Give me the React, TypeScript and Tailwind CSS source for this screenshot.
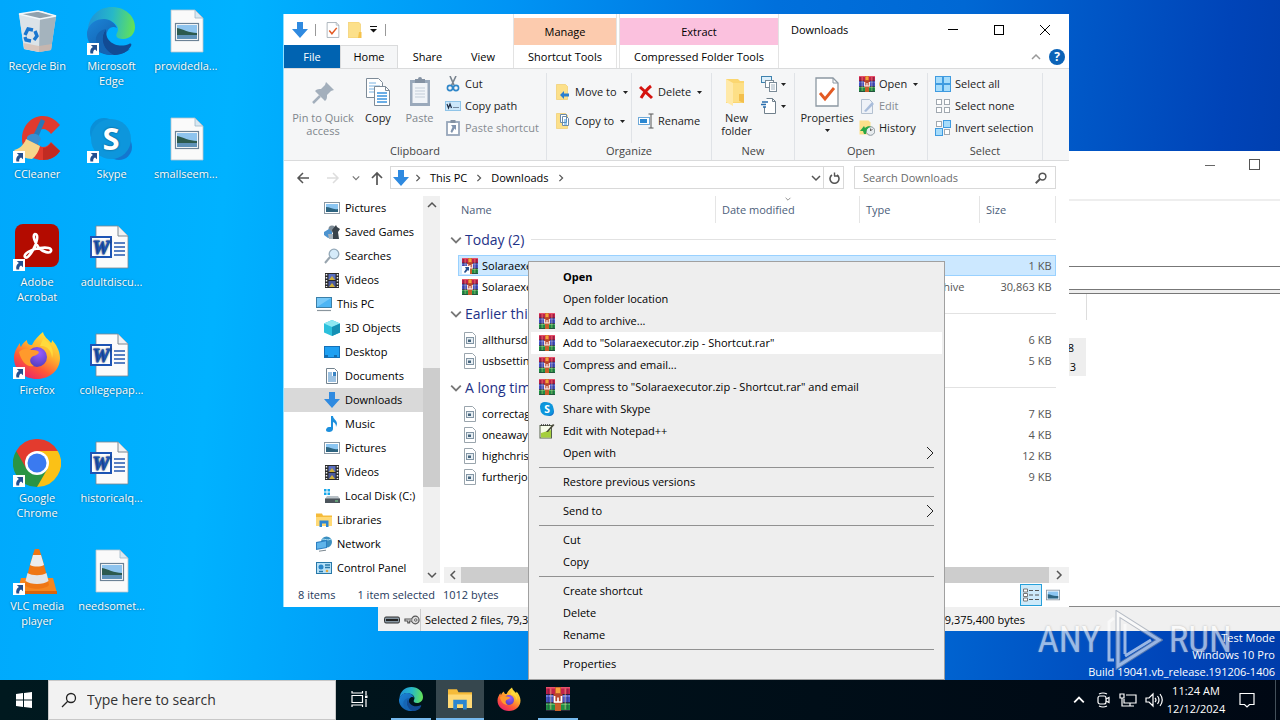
import React from "react";

type IconProps = { className?: string };

/* ---------- application and file icons ---------- */

function RarIcon({ className = "size-4" }: IconProps) {
  return (
    <svg viewBox="0 0 16 16" className={className} aria-hidden="true">
      <rect x="0" y="0" width="16" height="5" fill="#c2224a" />
      <path d="M0 .5h16" stroke="#e8506a" />
      <rect x="0" y="5" width="16" height="5.500" fill="#4353c4" />
      <path d="M0 6h16" stroke="#7f8cf0" />
      <rect x="0" y="10.500" width="16" height="5.500" fill="#1f8f44" />
      <path d="M0 11.500h16" stroke="#54b868" />
      <path d="M0 5h16M0 10.500h16M0 15.700h16" stroke="#2a1838" strokeWidth=".6" />
      <path d="M1.500 1v14M14.500 1v14" stroke="#2c1a44" strokeWidth=".7" opacity=".4" />
      <path d="M3.200 1v14M12.800 1v14" stroke="#f0c890" strokeWidth=".7" opacity=".6" />
      <rect x="6" y="0" width="4" height="16" fill="#c8602a" />
      <rect x="6.600" y=".5" width="2.800" height="3.500" fill="#f5a23c" />
      <rect x="5" y="4.500" width="6" height="6.500" fill="#b8452c" />
      <path d="M5.700 6v4h4.600V6M8 7v2.500" stroke="#fff" strokeWidth="1.100" fill="none" />
    </svg>
  );
}

function ShortcutBadge() {
  return (
    <svg viewBox="0 0 12 12" className="absolute bottom-0 left-0 size-3" aria-hidden="true">
      <rect width="12" height="12" fill="#fff" />
      <path d="M3.800 2h6.200v6.200L8.100 6.400C6.500 7 6 8.200 6.200 10.500L3.400 10.500C2.600 7.500 4 5.300 5.900 4.100z" fill="#24508f" />
    </svg>
  );
}

function RecycleIcon({ className = "size-12" }: IconProps) {
  return (
    <svg viewBox="0 0 48 48" className={className} aria-hidden="true">
      <path d="M6 7 11 42 26 45 38 43 43 9 29 4z" fill="#cbd5dc" />
      <path d="M6 7 11 42 26 45 27 12z" fill="#dbe3e8" />
      <path d="M27 12 26 45 38 43 43 9z" fill="#a4b3bd" />
      <path d="M6 7 27 12 43 9 25 4z" fill="#8fa1ad" stroke="#f2f7fa" strokeWidth="1.600" />
      <path d="M10.500 36l.8 6 15 3 11.700-2 1-6-13 2z" fill="#d9b9a8" opacity=".65" />
      <g fill="none" stroke="#1976cf" strokeWidth="3.400">
        <path d="M12 28l3-6 5 1" />
        <path d="M22 24l2 5-3 4" />
        <path d="M18 34l-5-1-1-3" />
      </g>
    </svg>
  );
}

function EdgeIcon({ className = "size-12" }: IconProps) {
  return (
    <svg viewBox="0 0 48 48" className={className} aria-hidden="true">
      <defs>
        <linearGradient id="edgeTop" x1="0" y1=".4" x2="1" y2=".5">
          <stop offset="0" stopColor="#1f93d8" />
          <stop offset=".5" stopColor="#27b8c8" />
          <stop offset="1" stopColor="#63e256" />
        </linearGradient>
        <linearGradient id="edgeLow" x1="0" y1="0" x2="1" y2="1">
          <stop offset="0" stopColor="#1c86d8" />
          <stop offset="1" stopColor="#0e4f9e" />
        </linearGradient>
      </defs>
      <path d="M1 22C2 9 12 0 25 0c13 0 23 9 23 20 0 7-5 12-12 12-6 0-8-3-6-6 3-5-1-11-9-13C12 11 4 15 1 22z" fill="url(#edgeTop)" />
      <path d="M0 25C2 16 9 12 17 12c6 0 11 4 13 9-3-2-7-1-9 2-5 9 3 21 17 20 2 0 4-1 5-1-5 4-12 6-19 6C10 48-1 37 0 25z" fill="url(#edgeLow)" />
      <path d="M19 22c-6 8-4 20 8 26 9 0 14-4 17-9 1-2 0-3-2-2-11 5-25-2-23-15z" fill="#124b94" />
      <path d="M19 22c-4 5-5 12-2 17 2 4 5 7 10 9-9 1-17-4-18-14-1-6 4-11 10-12z" fill="#1565b4" />
    </svg>
  );
}

function FirefoxIcon({ className = "size-12" }: IconProps) {
  return (
    <svg viewBox="0 0 48 48" className={className} aria-hidden="true">
      <defs>
        <linearGradient id="ffBody" x1=".85" y1="0" x2=".25" y2="1">
          <stop offset="0" stopColor="#fff23f" />
          <stop offset=".4" stopColor="#ffb22e" />
          <stop offset=".7" stopColor="#ff5a36" />
          <stop offset="1" stopColor="#e8206c" />
        </linearGradient>
        <radialGradient id="ffGlobe" cx=".6" cy=".3" r=".8">
          <stop offset="0" stopColor="#9a5cff" />
          <stop offset="1" stopColor="#4b3bb5" />
        </radialGradient>
      </defs>
      <path d="M30 1c1 5 5 7 8 11 1-1 1-2 1-3 4 4 8 11 8 18 0 12-10 21-23 21S1 39 1 27c0-6 3-11 6-15 0 2 0 3 1 4 1-3 3-5 6-7 0 4 2 5 5 5 3-6 7-10 11-13z" fill="url(#ffBody)" />
      <circle cx="24" cy="26" r="10" fill="url(#ffGlobe)" />
      <path d="M6 21c4-4 8-4 12-2 3 0 6 0 8 2-1 4-6 3-8 6-2 3 0 6 3 8-7 2-13-5-15-14z" fill="#ff9a2c" />
      <path d="M27 15c7-1 12 5 12 12 3-8-2-16-9-19z" fill="#ffda3c" />
    </svg>
  );
}

function ChromeIcon({ className = "size-12" }: IconProps) {
  return (
    <svg viewBox="0 0 48 48" className={className} aria-hidden="true">
      <path d="M24 24 3.200 12A24 24 0 0 1 44.800 12z" fill="#e33b2e" />
      <path d="M24 24 44.800 12A24 24 0 0 1 24 48z" fill="#fbc116" />
      <path d="M24 12h20.800L24 48l10-18z" fill="#fbc116" />
      <path d="M24 24v24A24 24 0 0 1 3.200 12z" fill="#2a9445" />
      <path d="M34.400 30 24 48 19 30z" fill="#2a9445" />
      <path d="M3.200 12 13.600 30 24 12z" fill="#e33b2e" />
      <circle cx="24" cy="24" r="12" fill="#fff" />
      <circle cx="24" cy="24" r="9.500" fill="#3a7af0" />
    </svg>
  );
}

function VlcIcon({ className = "size-12" }: IconProps) {
  return (
    <svg viewBox="0 0 48 48" className={className} aria-hidden="true">
      <path d="M8 31h32l4 15H4z" fill="#f6861f" />
      <path d="M4 44h40v3H4z" fill="#d9640c" />
      <path d="M22 2h4c1 0 10 34 10 36-4 5-20 5-24 0C12 36 21 2 22 2z" fill="#ef7613" />
      <path d="M20 8h8l3 10c-4 2-10 2-14 0z" fill="#ececec" />
      <path d="M14.500 26c5 3 14 3 19 0l2 8c-5 4-18 4-23 0z" fill="#e4e4e4" />
    </svg>
  );
}

function CcleanerIcon({ className = "size-12" }: IconProps) {
  return (
    <svg viewBox="0 0 48 48" className={className} aria-hidden="true">
      <path d="M47 10C42 4 36 1 30 1 18 1 9 11 9 24c0 12 9 21 20 21 8 0 14-3 18-9l-9-9c-2 3-5 5-8 5-4 0-7-4-7-9s3-9 7-9c3 0 6 2 8 5z" fill="#df3a2e" />
      <path d="M30 45c7 0 13-3 17-9l-9-8c-2 3-5 5-8 5z" fill="#c12b22" />
      <path d="M28 4l4 2-8 19-5-2z" fill="#2878b8" />
      <path d="M14 22c4-5 12-4 14 2l-4 6-10-5z" fill="#3a8ed0" />
      <path d="M13 24l14 7c-1 5-4 10-8 13-5 0-14-3-18-9 5-1 10-5 12-11z" fill="#f6d68c" />
    </svg>
  );
}

function SkypeIcon({ className = "size-12" }: IconProps) {
  return (
    <svg viewBox="0 0 48 48" className={className} aria-hidden="true">
      <circle cx="17" cy="17" r="14" fill="#0a8fd8" />
      <circle cx="32" cy="32" r="13" fill="#1477cf" />
      <circle cx="24" cy="24" r="20" fill="#0d96dc" />
      <text x="24" y="35" textAnchor="middle" fontFamily="Open Sans, sans-serif" fontSize="31" fontWeight="700" fill="#fff">S</text>
    </svg>
  );
}

function AcrobatIcon({ className = "size-12" }: IconProps) {
  return (
    <svg viewBox="0 0 48 48" className={className} aria-hidden="true">
      <rect x="2" y="1" width="44" height="43" rx="8" fill="#b30b00" />
      <path d="M12 34c-2-3 6-8 15-9 7-1 12 0 11 3s-8 1-12-3c-4-5-7-13-4-14 4 0 2 9-2 16-3 5-6 9-8 7z" fill="none" stroke="#fff" strokeWidth="2.600" />
    </svg>
  );
}

function PictureFileIcon({ className = "size-12" }: IconProps) {
  return (
    <svg viewBox="0 0 48 48" className={className} aria-hidden="true">
      <path d="M9 3h24l8 8v34H9z" fill="#fafafa" stroke="#b9c4cc" strokeWidth=".8" />
      <path d="M33 3v8h8z" fill="#d8e8f2" stroke="#9fb6c6" strokeWidth=".8" />
      <rect x="13.500" y="16.500" width="23" height="17" fill="#fff" stroke="#6c8296" strokeWidth="1.200" />
      <rect x="15" y="18" width="20" height="14" fill="#8fc4ee" />
      <path d="M15 21c6 1 12 5 20 5v6H15z" fill="#2c5a4e" />
      <path d="M15 28h20v4H15z" fill="#5f92b8" />
    </svg>
  );
}

function WordFileIcon({ className = "size-12" }: IconProps) {
  return (
    <svg viewBox="0 0 48 48" className={className} aria-hidden="true">
      <path d="M9 3h22l10 10v32H9z" fill="#fbfbfb" stroke="#7c8790" strokeWidth=".8" />
      <path d="M31 3v10h10" fill="#eef1f3" stroke="#7c8790" />
      <path d="M27 20h11M27 24h11M27 28h11M27 32h11" stroke="#2458b0" strokeWidth="1.300" />
      <rect x="4" y="14" width="20" height="20" fill="#fff" stroke="#1d54b4" strokeWidth="2" />
      <text x="14" y="31" textAnchor="middle" fontFamily="Liberation Serif, serif" fontSize="19" fontStyle="italic" fontWeight="700" fill="#1d54b4" stroke="#1d54b4">W</text>
    </svg>
  );
}

function ArrowDownIcon({ className = "size-4" }: IconProps) {
  return (
    <svg viewBox="0 0 16 16" className={className} aria-hidden="true">
      <path d="M5 0h6v7h5l-8 9-8-9h5z" fill="#2f8ae0" />
    </svg>
  );
}

function FolderIcon({ className = "size-4" }: IconProps) {
  return (
    <svg viewBox="0 0 16 16" className={className} aria-hidden="true">
      <path d="M1.500 0h10l2 2v14h-12z" fill="#fce08a" stroke="#f0c860" strokeWidth=".6" />
      <path d="M12 10h2.500v6H11z" fill="#f5c24a" />
    </svg>
  );
}

function NewFolderIcon() {
  return (
    <svg viewBox="0 0 32 32" className="size-8" aria-hidden="true">
      <path d="M5 3h12l2 2h4v22H5z" fill="#fbd670" />
      <path d="M5 3l7 4v23l-7-4z" fill="#ffe9a8" />
      <path d="M12 7h11v19H12z" fill="#fddf86" />
      <path d="M18 18h5v9l-5-2z" fill="#f3bf4c" />
    </svg>
  );
}

function PictureIcon({ className = "size-4" }: IconProps) {
  return (
    <svg viewBox="0 0 16 16" className={className} aria-hidden="true">
      <rect x=".5" y="2.500" width="15" height="11" fill="#fff" stroke="#8a98a4" />
      <rect x="2" y="4" width="12" height="8" fill="#8cc6f2" />
      <path d="M2 7c4 0 7 3 12 2v3H2z" fill="#2d6480" />
    </svg>
  );
}

function SmallFileIcon({ className = "size-4" }: IconProps) {
  return (
    <svg viewBox="0 0 16 16" className={className} aria-hidden="true">
      <path d="M2.500.5h8l3 3v12h-11z" fill="#fff" stroke="#9aa5ad" />
      <rect x="4.500" y="5.500" width="7" height="6" fill="#e6edf2" stroke="#8295a4" />
      <path d="M6 7.500h3V10H6z" fill="#47667e" />
    </svg>
  );
}

function CheckDocIcon({ className = "size-4" }: IconProps) {
  return (
    <svg viewBox="0 0 24 30" className={className} aria-hidden="true">
      <path d="M1 1h17l5 5v23H1z" fill="#fff" stroke="#8c98a2" strokeWidth="1.300" />
      <path d="M18 1v5h5" fill="none" stroke="#8c98a2" />
      <path d="M5 16l5 6 9-11" fill="none" stroke="#e35a23" strokeWidth="2.800" />
    </svg>
  );
}

function SavedGamesIcon() {
  return (
    <svg viewBox="0 0 16 16" className="size-4 shrink-0" aria-hidden="true">
      <circle cx="8" cy="5" r="3.500" fill="#7d8b96" />
      <path d="M9 15V9L8 6l4-5 1 2 3 2-2 3 1 7z" fill="#39434b" />
      <path d="M0 8l5-3 3 3v5l-4 1-4-3z" fill="#4c93cf" />
      <path d="M4 10h5v5H5z" fill="#a7b3bc" />
    </svg>
  );
}

function SearchesIcon() {
  return (
    <svg viewBox="0 0 16 16" className="size-4 shrink-0" aria-hidden="true">
      <path d="M1 15l5-6" stroke="#98a4ae" strokeWidth="2" />
      <circle cx="10" cy="6" r="4.800" fill="#d5ebfa" stroke="#93a8b8" strokeWidth="1.300" />
    </svg>
  );
}

function VideoIcon() {
  return (
    <svg viewBox="0 0 16 16" className="size-4 shrink-0" aria-hidden="true">
      <rect x="1" y="1" width="14" height="15" fill="#2a2a2a" />
      <path d="M2.500 2v13M13.500 2v13" stroke="#f1f1f1" strokeWidth="1.500" strokeDasharray="1.500 1.500" />
      <rect x="4.500" y="2" width="7" height="6" fill="#5a6fc0" />
      <rect x="4.500" y="9" width="7" height="6" fill="#4a5aa0" />
      <path d="M5 8l3-4 3 4zM5 15l3-4 3 4z" fill="#d0b13a" />
    </svg>
  );
}

function ComputerIcon() {
  return (
    <svg viewBox="0 0 16 16" className="size-4 shrink-0" aria-hidden="true">
      <rect x=".5" y="1.500" width="15" height="10" fill="#4db5f4" stroke="#3b7fa8" />
      <path d="M1 2h14L1 11z" fill="#8ad2fa" opacity=".7" />
      <path d="M1 14.500h14" stroke="#8a959d" strokeWidth="1.200" />
    </svg>
  );
}

function CubeIcon() {
  return (
    <svg viewBox="0 0 16 16" className="size-4 shrink-0" aria-hidden="true">
      <path d="M8 0l8 3.500v9L8 16l-8-3.500v-9z" fill="#2cc0dc" />
      <path d="M8 0l8 3.500L8 7 0 3.500z" fill="#8ee8f2" />
      <path d="M8 7l8-3.500v9L8 16z" fill="#1590b4" />
    </svg>
  );
}

function DesktopIcon() {
  return (
    <svg viewBox="0 0 16 16" className="size-4 shrink-0" aria-hidden="true">
      <rect x=".5" y="2.500" width="15" height="11" fill="#1fa0f2" stroke="#1470b8" />
      <path d="M1 12h14" stroke="#0f5c9c" strokeDasharray="3 6" strokeWidth="1.500" />
    </svg>
  );
}

function DocumentIcon() {
  return (
    <svg viewBox="0 0 16 16" className="size-4 shrink-0" aria-hidden="true">
      <path d="M2.500.5h8l3 3v12h-11z" fill="#fff" stroke="#73838f" />
      <path d="M4 5h4M4 7h4M4 9h8M4 11h8M4 13h8" stroke="#3a84c4" />
      <path d="M9 4h3v4H9z" fill="#3a84c4" />
    </svg>
  );
}

function MusicIcon() {
  return (
    <svg viewBox="0 0 16 16" className="size-4 shrink-0" aria-hidden="true">
      <path d="M7 0h2c0 3 4 4 4 8l-1 3c0-3-1-4-3-5v7c0 2-2 3-4 3s-3-1-3-2 1-3 3-3h2z" fill="#1c8fdd" />
    </svg>
  );
}

function DiskIcon() {
  return (
    <svg viewBox="0 0 16 16" className="size-4 shrink-0" aria-hidden="true">
      <path d="M0 1h2.500v2.500H0zM3.500 1H6v2.500H3.500zM0 4.500h2.500V7H0zM3.500 4.500H6V7H3.500z" fill="#17a7ea" />
      <path d="M3 8h11l2 3H1z" fill="#b9c1c7" />
      <rect x="1" y="10.500" width="15" height="4.500" fill="#4c555c" />
      <path d="M11 13h3" stroke="#78e08f" />
    </svg>
  );
}

function LibraryIcon({ className = "size-4 shrink-0" }: IconProps) {
  return (
    <svg viewBox="0 0 16 16" className={className} aria-hidden="true">
      <path d="M0 1.500h6l1 2h9V14H0z" fill="#f5bb3a" />
      <path d="M0 5h16v9H0z" fill="#ffd975" />
      <path d="M3.500 8.500h9V15H10v-3.500H6V15H3.500z" fill="#2e86d0" />
    </svg>
  );
}

function NetworkIcon() {
  return (
    <svg viewBox="0 0 16 16" className="size-4 shrink-0" aria-hidden="true">
      <circle cx="10.500" cy="6" r="5.500" fill="#3c8fc0" />
      <path d="M6 3c3 0 6 2 9 0" stroke="#a8def5" fill="none" />
      <path d="M0 6l11-2v8l-11 2z" fill="#2c7fc2" />
      <path d="M1 7l9-1.700v6L1 12.800z" fill="#5fb4ea" />
      <path d="M3 15.200l7-1" stroke="#7b8790" />
    </svg>
  );
}

function ControlPanelIcon() {
  return (
    <svg viewBox="0 0 16 16" className="size-4 shrink-0" aria-hidden="true">
      <rect x=".5" y="2.500" width="15" height="11" fill="#b6e1f8" stroke="#2878a8" />
      <circle cx="5" cy="7" r="2.500" fill="#2a86c8" />
      <path d="M9 5h5M9 7.500h5M3 11.500h4" stroke="#2878a8" strokeWidth="1.300" />
      <circle cx="11" cy="11" r="1.300" fill="#e8a73a" />
    </svg>
  );
}

function NotepadIcon() {
  return (
    <svg viewBox="0 0 16 16" className="size-4" aria-hidden="true">
      <rect x="1" y="2.500" width="11.500" height="12.500" fill="#f6fbe8" stroke="#55604a" />
      <path d="M2 10l10-3v7.500H2z" fill="#a5cf3c" />
      <path d="M2 2h10" stroke="#333" strokeWidth="1.600" strokeDasharray="1 1" />
      <path d="M7 9l7-8 1.500 1L9 9z" fill="#4a4a3c" />
    </svg>
  );
}

/* ---------- small line glyphs ---------- */

function Chevron({ d, className = "size-2.5", color = "#555" }: IconProps & { d: "up" | "down" | "left" | "right"; color?: string }) {
  const paths = { up: "M1 7l4-4 4 4", down: "M1 3l4 4 4-4", left: "M7 1L3 5l4 4", right: "M3 1l4 4-4 4" };
  return (
    <svg viewBox="0 0 10 10" className={className} aria-hidden="true">
      <path d={paths[d]} fill="none" stroke={color} strokeWidth="1.500" />
    </svg>
  );
}

function Caret() {
  return (
    <svg viewBox="0 0 5 3" className="h-[3px] w-[5px] shrink-0" aria-hidden="true">
      <path d="M0 0h5L2.500 3z" fill="#222" />
    </svg>
  );
}

function Magnifier({ className = "size-3", color = "#555", thin = false }: IconProps & { color?: string; thin?: boolean }) {
  return (
    <svg viewBox="0 0 16 16" className={className} aria-hidden="true">
      <circle cx="10" cy="6" r="4.500" fill="none" stroke={color} strokeWidth={thin ? 1.3 : 2} />
      <path d="M7 9l-6 6" stroke={color} strokeWidth={thin ? 1.3 : 2.6} />
    </svg>
  );
}

/* ---------- desktop ---------- */

const desktopIcons: { label: string; Icon: React.FC<IconProps>; shortcut?: boolean; place: string }[] = [
  { label: "Recycle Bin", Icon: RecycleIcon, place: "col-start-1 row-start-1" },
  { label: "CCleaner", Icon: CcleanerIcon, shortcut: true, place: "col-start-1 row-start-2" },
  { label: "Adobe Acrobat", Icon: AcrobatIcon, shortcut: true, place: "col-start-1 row-start-3" },
  { label: "Firefox", Icon: FirefoxIcon, shortcut: true, place: "col-start-1 row-start-4" },
  { label: "Google Chrome", Icon: ChromeIcon, shortcut: true, place: "col-start-1 row-start-5" },
  { label: "VLC media player", Icon: VlcIcon, shortcut: true, place: "col-start-1 row-start-6" },
  { label: "Microsoft Edge", Icon: EdgeIcon, shortcut: true, place: "col-start-2 row-start-1" },
  { label: "Skype", Icon: SkypeIcon, shortcut: true, place: "col-start-2 row-start-2" },
  { label: "adultdiscu...", Icon: WordFileIcon, place: "col-start-2 row-start-3" },
  { label: "collegepap...", Icon: WordFileIcon, place: "col-start-2 row-start-4" },
  { label: "historicalq...", Icon: WordFileIcon, place: "col-start-2 row-start-5" },
  { label: "needsomet...", Icon: PictureFileIcon, place: "col-start-2 row-start-6" },
  { label: "providedla...", Icon: PictureFileIcon, place: "col-start-3 row-start-1" },
  { label: "smallseem...", Icon: PictureFileIcon, place: "col-start-3 row-start-2" },
];

function DesktopIcons() {
  return (
    <div className="grid w-[223px] grid-cols-3 grid-rows-[repeat(6,108px)]">
      {desktopIcons.map(({ label, Icon, shortcut, place }) => (
        <button key={label} className={`flex flex-col items-center gap-[3px] px-2 pt-[7px] text-white [text-shadow:0_0_2px_#0008] ${place}`}>
          <span className="relative">
            <Icon className="size-12" />
            {shortcut && <ShortcutBadge />}
          </span>
          <span className="leading-[15px]">{label}</span>
        </button>
      ))}
    </div>
  );
}

/* ---------- archive window behind ---------- */

function ArchiveWindow() {
  return (
    <section aria-label="Archive" className="absolute top-[151px] right-0 bottom-[49px] left-[378px] flex flex-col bg-white">
      <div className="flex h-[50px] items-start justify-end border-b-2 border-[#eee] pt-2 pr-5">
        <button aria-label="Minimize" className="flex size-3 items-center">
          <span className="h-px w-2.5 bg-[#666]" />
        </button>
        <button aria-label="Maximize" className="ml-8 size-[11px] border border-[#555]" />
      </div>
      <div className="h-[66px] border-b border-[#777]" />
      <div className="h-[23px] border-b border-[#777]" />
      <div className="h-1 border-b border-[#777] bg-[#eee]" />
      <div className="h-[26px] w-[709px] border-r border-[#ddd]" />
      <div className="mt-[18px] flex h-[38px] w-[708px] flex-col items-end bg-[#eee] pr-3 leading-[19px] text-black">
        <span>8</span>
        <span className="-mr-0.5">13</span>
      </div>
      <div className="mt-auto flex h-[25px] items-center border-t border-[#888] bg-[#f0f0f0] pt-0.5 text-black">
        <span className="flex h-full w-[43px] items-center gap-1 border-r border-[#ccc] pl-1.5">
          <svg viewBox="0 0 16 8" className="h-2 w-4" aria-hidden="true">
            <rect x=".5" y="1" width="15" height="6" rx="1.500" fill="#8695a0" stroke="#333" />
            <path d="M2 4h12" stroke="#222" strokeWidth="2" />
          </svg>
          <svg viewBox="0 0 17 10" className="h-2.5 w-4" aria-hidden="true">
            <circle cx="12" cy="5" r="4" fill="#ddd" stroke="#555" strokeWidth="1.300" />
            <circle cx="12.500" cy="5" r="1.300" fill="#fff" stroke="#555" />
            <path d="M8 4H1v2h3v2h2V6h2" stroke="#555" strokeWidth="1.200" fill="#ddd" />
          </svg>
        </span>
        <span className="pl-1">Selected 2 files, 79,375,400</span>
        <span className="ml-auto pr-[255px]">79,375,400 bytes</span>
      </div>
    </section>
  );
}

/* ---------- explorer ribbon ---------- */

function SmallCommand({ icon, label, dim, caret }: { icon: React.ReactNode; label: string; dim?: boolean; caret?: boolean }) {
  return (
    <button className={`flex h-[22px] items-center gap-1 whitespace-nowrap ${dim ? "text-[#858b92]" : "text-[#222]"}`}>
      {icon}
      {label}
      {caret && <span className={label ? "pl-0.5" : ""}><Caret /></span>}
    </button>
  );
}

function RibbonGroup({ name, width, children }: { name: string; width: string; children: React.ReactNode }) {
  return (
    <div className={`flex flex-col border-r border-[#e0e3e7] ${width}`}>
      <div className="flex h-[70px]">{children}</div>
      <div className="text-center leading-4 text-[#444]">{name}</div>
    </div>
  );
}

function BigCommand({ icon, label, width, dim }: { icon: React.ReactNode; label: React.ReactNode; width: string; dim?: boolean }) {
  return (
    <button className={`flex flex-col items-center gap-[3px] pt-[3px] leading-[13px] ${width} ${dim ? "text-[#7f868d]" : "text-[#222]"}`}>
      {icon}
      <span className="flex flex-col items-center">{label}</span>
    </button>
  );
}

function PinIcon() {
  return (
    <svg viewBox="0 0 32 32" className="size-8" aria-hidden="true">
      <path d="M19 6l8 8-3 1-4 4c0 3 0 4-2 6L8 15c2-2 4-2 6-2l4-4z" fill="#a3afbc" />
      <path d="M13 20l-7 7" stroke="#a3afbc" strokeWidth="2.500" />
    </svg>
  );
}

function CopyIcon({ className = "size-8" }: IconProps) {
  return (
    <svg viewBox="0 0 32 32" className={className} aria-hidden="true">
      <path d="M4.500 2.500h12l4 4v15h-16z" fill="#fff" stroke="#7d8b98" />
      <path d="M7 7h7M7 10h11M7 13h11M7 16h11" stroke="#79b2e2" />
      <path d="M12.500 10.500h11l4 4v15h-15z" fill="#fff" stroke="#7d8b98" />
      <path d="M23.500 10.500v4h4" fill="none" stroke="#7d8b98" />
      <path d="M15 17h10M15 20h10M15 23h10M15 26h10" stroke="#3b94de" strokeWidth="1.400" />
    </svg>
  );
}

function PasteIcon() {
  return (
    <svg viewBox="0 0 32 32" className="size-8" aria-hidden="true">
      <rect x="6" y="4" width="20" height="26" fill="#9aa9bb" />
      <rect x="8.500" y="7" width="15" height="20" fill="#f1f4f8" />
      <path d="M11 12h10M11 15h10M11 18h10M11 21h10" stroke="#c3cdd8" />
      <path d="M11 3h3a2 2 0 0 1 4 0h3v4H11z" fill="#8492a3" />
    </svg>
  );
}

function ScissorsIcon() {
  return (
    <svg viewBox="0 0 16 16" className="size-4" aria-hidden="true">
      <path d="M5 0l4 9M11 0L6.500 9.500" stroke="#78838e" strokeWidth="1.600" />
      <circle cx="5" cy="12" r="2.600" fill="none" stroke="#2f86c8" strokeWidth="1.600" />
      <circle cx="11" cy="12" r="2.600" fill="none" stroke="#2f86c8" strokeWidth="1.600" />
    </svg>
  );
}

function CopyPathIcon() {
  return (
    <svg viewBox="0 0 16 16" className="size-4" aria-hidden="true">
      <rect x=".5" y="3.500" width="15" height="9" fill="#cce7fa" stroke="#8fc4e8" />
      <path d="M2 6l1.500 4L5 6l1.500 4M8.500 9.500h1M10.500 9.500h1M12.500 9.500h1" stroke="#1c2c44" strokeWidth="1.200" fill="none" />
    </svg>
  );
}

function PasteShortcutIcon() {
  return (
    <svg viewBox="0 0 16 16" className="size-4" aria-hidden="true">
      <rect x="2" y="2" width="12" height="13" fill="#fff" stroke="#97a6ba" strokeWidth="1.800" />
      <rect x="5.500" y="0" width="5" height="3" fill="#8492a3" />
      <path d="M6 5h5v5L9.500 8.500 7 13 5.500 11.500 7.500 7z" fill="#8194ae" />
    </svg>
  );
}

function MoveToIcon() {
  return (
    <svg viewBox="0 0 16 16" className="size-4" aria-hidden="true">
      <path d="M1.500.5h9l2 2v13h-11z" fill="#fce08a" stroke="#f0c860" strokeWidth=".6" />
      <path d="M5 11l4-4v2.500h5v3H9V15z" fill="#2b7fd0" />
    </svg>
  );
}

function CopyToIcon() {
  return (
    <svg viewBox="0 0 16 16" className="size-4" aria-hidden="true">
      <path d="M1.500.5h9l2 2v13h-11z" fill="#fce08a" stroke="#f0c860" strokeWidth=".6" />
      <path d="M5.500 1.500h6v8h-6zM7.500 3.500h4l2 2v7h-6z" fill="#fff" stroke="#6a8bab" />
      <path d="M9 7h3M9 9h3M9 11h3" stroke="#3b94de" />
    </svg>
  );
}

function DeleteIcon() {
  return (
    <svg viewBox="0 0 16 16" className="size-4" aria-hidden="true">
      <path d="M2 3l12 11M13 2C9 5 6 9 3 14" stroke="#d5130f" strokeWidth="3" />
    </svg>
  );
}

function RenameIcon() {
  return (
    <svg viewBox="0 0 16 16" className="size-4" aria-hidden="true">
      <rect x=".5" y="4.500" width="11" height="7" fill="#fff" stroke="#6fa9d8" />
      <rect x="2" y="6" width="7" height="4" fill="#2c88d2" />
      <path d="M10.500 1h5M13 1v14M10.500 15h5" stroke="#555" />
    </svg>
  );
}

function NewItemIcon() {
  return (
    <svg viewBox="0 0 16 16" className="size-4" aria-hidden="true">
      <rect x=".5" y=".5" width="10" height="6" fill="#dceffb" stroke="#3e82ae" />
      <rect x="4.500" y="4.500" width="8" height="7" fill="#fff" stroke="#7a8b98" />
      <rect x="8.500" y="6.500" width="7" height="9" fill="#fff" stroke="#7a8b98" />
      <path d="M10 9h4M10 11h4M10 13h4" stroke="#9fb0bd" />
    </svg>
  );
}

function EasyAccessIcon() {
  return (
    <svg viewBox="0 0 16 16" className="size-4" aria-hidden="true">
      <path d="M5.500.5h6l3 3v12h-11V9" fill="#fff" stroke="#70808c" />
      <path d="M11.500.5v3h3" fill="none" stroke="#70808c" />
      <path d="M1 4h6M0 6.500h5M2 9h3" stroke="#2b6fae" strokeWidth="1.300" />
    </svg>
  );
}

function EditIcon() {
  return (
    <svg viewBox="0 0 16 16" className="size-4" aria-hidden="true">
      <path d="M2.500 1.500h8l3 3v11h-11z" fill="#eef2f8" stroke="#b3c0d0" />
      <path d="M5 13l8-9 2 2-8 8z" fill="#a9bddb" />
    </svg>
  );
}

function HistoryIcon() {
  return (
    <svg viewBox="0 0 16 16" className="size-4" aria-hidden="true">
      <path d="M.5.5h9l2 2v12H.5z" fill="#fce08a" />
      <circle cx="11.500" cy="11" r="4.300" fill="#e8ecef" stroke="#8b979f" />
      <path d="M11.500 8.500V11l2-2" stroke="#666" fill="none" />
      <path d="M1 11l4-5 1 2c2-2 5-2 6-1-3 0-5 3-5 7H5l-1-3z" fill="#28a745" />
    </svg>
  );
}

function SelectIcon({ fills }: { fills: [string, string, string, string] }) {
  const spots = [[0.5, 0.5], [8.5, 0.5], [0.5, 8.5], [8.5, 8.5]];
  return (
    <svg viewBox="0 0 16 16" className="size-4" aria-hidden="true">
      {spots.map(([x, y], i) =>
        fills[i] === "#fff" ? (
          <rect key={i} x={x + 1} y={y + 1} width="5" height="5" fill="#fff" stroke="#a0a8b0" />
        ) : (
          <rect key={i} x={x} y={y} width="7" height="7" fill={fills[i]} stroke="#3f9be0" />
        ),
      )}
    </svg>
  );
}

function Ribbon() {
  const on = "#a6dcfb";
  return (
    <div className="flex h-[93px] border-y border-[#dadbdc] bg-[#f5f6f7] pt-1">
      <RibbonGroup name="Clipboard" width="w-[263px]">
        <BigCommand width="w-[78px]" dim icon={<PinIcon />} label={<><span className="whitespace-nowrap">Pin to Quick</span><span>access</span></>} />
        <BigCommand width="w-8" icon={<CopyIcon />} label="Copy" />
        <BigCommand width="w-[51px]" dim icon={<PasteIcon />} label="Paste" />
        <div className="flex flex-col">
          <SmallCommand icon={<ScissorsIcon />} label="Cut" />
          <SmallCommand icon={<CopyPathIcon />} label="Copy path" />
          <SmallCommand icon={<PasteShortcutIcon />} label="Paste shortcut" dim />
        </div>
      </RibbonGroup>
      <RibbonGroup name="Organize" width="w-[165px]">
        <div className="flex w-[85px] flex-col gap-[7px] border-r border-[#e0e3e7] pt-2 pl-2">
          <SmallCommand icon={<MoveToIcon />} label="Move to" caret />
          <SmallCommand icon={<CopyToIcon />} label="Copy to" caret />
        </div>
        <div className="flex flex-col gap-[7px] pt-2 pl-1.5">
          <SmallCommand icon={<DeleteIcon />} label="Delete" caret />
          <SmallCommand icon={<RenameIcon />} label="Rename" />
        </div>
      </RibbonGroup>
      <RibbonGroup name="New" width="w-[83px]">
        <BigCommand width="w-[49px]" icon={<NewFolderIcon />} label={<><span>New</span><span>folder</span></>} />
        <div className="flex flex-col">
          <SmallCommand icon={<NewItemIcon />} label="" caret />
          <SmallCommand icon={<EasyAccessIcon />} label="" caret />
        </div>
      </RibbonGroup>
      <RibbonGroup name="Open" width="w-[133px]">
        <BigCommand width="w-16" icon={<CheckDocIcon className="h-8 w-6" />} label={<><span>Properties</span><span className="pt-[5px]"><Caret /></span></>} />
        <div className="flex flex-col">
          <SmallCommand icon={<RarIcon />} label="Open" caret />
          <SmallCommand icon={<EditIcon />} label="Edit" dim />
          <SmallCommand icon={<HistoryIcon />} label="History" />
        </div>
      </RibbonGroup>
      <RibbonGroup name="Select" width="w-[115px]">
        <div className="flex flex-col pl-[7px]">
          <SmallCommand icon={<SelectIcon fills={[on, on, on, on]} />} label="Select all" />
          <SmallCommand icon={<SelectIcon fills={["#fff", "#fff", "#fff", "#fff"]} />} label="Select none" />
          <SmallCommand icon={<SelectIcon fills={["#fff", on, on, "#fff"]} />} label="Invert selection" />
        </div>
      </RibbonGroup>
    </div>
  );
}

function TitleArea() {
  return (
    <header className="flex h-[54px] text-black">
      <div className="flex w-[229px] flex-col">
        <div className="flex h-[31px] items-center pl-2">
          <ArrowDownIcon />
          <span className="mr-[7px] ml-[7px] h-3 w-px bg-[#999]" />
          <button aria-label="Properties" className="flex w-5 justify-center"><CheckDocIcon className="h-4 w-3.5" /></button>
          <button aria-label="New folder" className="ml-1"><FolderIcon /></button>
          <button aria-label="Customize" className="ml-[7px]">
            <svg viewBox="0 0 7 7" className="size-[7px]" aria-hidden="true"><path d="M0 .5h7" stroke="#111" /><path d="M0 3h7L3.500 6.500z" fill="#111" /></svg>
          </button>
          <span className="ml-2 h-3 w-px bg-[#999]" />
        </div>
        <nav className="flex flex-1">
          <button className="w-14 bg-[#0063b1] text-white">File</button>
          <button className="w-[58px] border border-b-0 border-[#dadbdc] bg-[#f5f6f7]">Home</button>
          <button className="w-[59px]">Share</button>
          <button className="w-[52px]">View</button>
        </nav>
      </div>
      <div className="mr-0.5 flex w-[104px] flex-col border-x border-[#e3e3e3] pt-1">
        <div className="flex h-[27px] items-center justify-center bg-[#fccbae]">Manage</div>
        <button className="flex-1 whitespace-nowrap">Shortcut Tools</button>
      </div>
      <div className="flex w-40 flex-col border-x border-[#e3e3e3] pt-1">
        <div className="flex h-[27px] items-center justify-center bg-[#fbc1de]">Extract</div>
        <button className="flex-1 whitespace-nowrap">Compressed Folder Tools</button>
      </div>
      <div className="flex flex-1 flex-col pl-3">
        <div className="flex h-[31px] items-center justify-between">
          <span>Downloads</span>
          <span className="flex items-center">
            <button aria-label="Minimize" className="flex h-6 w-[46px] items-center justify-center"><span className="h-px w-2.5 bg-black" /></button>
            <button aria-label="Maximize" className="flex h-6 w-[45px] items-center justify-center"><span className="size-2.5 border border-black" /></button>
            <button aria-label="Close" className="flex h-6 w-12 items-center justify-center">
              <svg viewBox="0 0 10 10" className="size-2.5" aria-hidden="true"><path d="M0 0l10 10M10 0L0 10" stroke="#000" /></svg>
            </button>
          </span>
        </div>
        <div className="flex flex-1 items-center justify-end gap-2 pr-1">
          <button aria-label="Collapse ribbon"><Chevron d="up" color="#999" /></button>
          <button aria-label="Help" className="flex size-4 items-center justify-center rounded-full bg-[#0b63b8] text-xs font-bold text-white">?</button>
        </div>
      </div>
    </header>
  );
}

function NavBar() {
  return (
    <div className="flex h-[35px] items-center pr-[13px] pb-0.5">
      <button aria-label="Back" className="ml-3 w-4">
        <svg viewBox="0 0 14 12" className="h-3 w-3.5" aria-hidden="true"><path d="M7 1L2 6l5 5M2 6h11" fill="none" stroke="#555" strokeWidth="1.500" /></svg>
      </button>
      <button aria-label="Forward" className="ml-[14px] w-4">
        <svg viewBox="0 0 14 12" className="h-3 w-3.5" aria-hidden="true"><path d="M7 1l5 5-5 5M12 6H1" fill="none" stroke="#ddd" strokeWidth="1.500" /></svg>
      </button>
      <button aria-label="Recent locations" className="ml-2.5"><Chevron d="down" className="size-2" color="#777" /></button>
      <button aria-label="Up" className="ml-2.5">
        <svg viewBox="0 0 14 14" className="size-3.5" aria-hidden="true"><path d="M2 7l5-5 5 5M7 2v12" fill="none" stroke="#555" strokeWidth="1.700" /></svg>
      </button>
      <div className="ml-1.5 flex h-[23px] flex-1 items-center border border-[#d9d9d9] pl-0.5 text-black">
        <ArrowDownIcon />
        <Chevron d="right" className="ml-[5px] size-2" />
        <button className="ml-2">This PC</button>
        <Chevron d="right" className="ml-2 size-2" />
        <button className="ml-2">Downloads</button>
        <Chevron d="right" className="ml-2 size-2" />
        <button aria-label="Previous locations" className="mr-0.5 ml-auto"><Chevron d="down" /></button>
        <button aria-label="Refresh" className="flex h-full w-5 items-center justify-center border-l border-[#d9d9d9]">
          <svg viewBox="0 0 12 12" className="size-3" aria-hidden="true"><path d="M9 3a4.500 4.500 0 1 1-5 0" fill="none" stroke="#555" strokeWidth="1.600" /><path d="M6.500 4V.5M6 4h4" stroke="#555" strokeWidth="1.400" /></svg>
        </button>
      </div>
      <label className="ml-2.5 flex h-[23px] w-[202px] items-center border border-[#d9d9d9] pr-2 pl-2">
        <input type="text" aria-label="Search Downloads" placeholder="Search Downloads" className="min-w-0 flex-1 bg-transparent outline-none placeholder:text-[#6a6a6a] placeholder:opacity-100" />
        <Magnifier />
      </label>
    </div>
  );
}

/* ---------- explorer body ---------- */

const treeItems: { label: string; icon: React.ReactNode; top?: boolean; active?: boolean }[] = [
  { label: "Pictures", icon: <PictureIcon /> },
  { label: "Saved Games", icon: <SavedGamesIcon /> },
  { label: "Searches", icon: <SearchesIcon /> },
  { label: "Videos", icon: <VideoIcon /> },
  { label: "This PC", icon: <ComputerIcon />, top: true },
  { label: "3D Objects", icon: <CubeIcon /> },
  { label: "Desktop", icon: <DesktopIcon /> },
  { label: "Documents", icon: <DocumentIcon /> },
  { label: "Downloads", icon: <ArrowDownIcon />, active: true },
  { label: "Music", icon: <MusicIcon /> },
  { label: "Pictures", icon: <PictureIcon /> },
  { label: "Videos", icon: <VideoIcon /> },
  { label: "Local Disk (C:)", icon: <DiskIcon /> },
  { label: "Libraries", icon: <LibraryIcon />, top: true },
  { label: "Network", icon: <NetworkIcon />, top: true },
  { label: "Control Panel", icon: <ControlPanelIcon />, top: true },
];

function Tree() {
  return (
    <nav className="flex w-[139px] flex-col overflow-hidden text-black">
      {treeItems.map(({ label, icon, top, active }, i) => (
        <button key={i} className={`flex h-6 shrink-0 items-center gap-[5px] whitespace-nowrap ${top ? "pl-8" : "pl-10"} ${active ? "bg-[#d9d9d9]" : ""}`}>
          {icon}
          {label}
        </button>
      ))}
    </nav>
  );
}

type FileRow = { name: string; type: string; size: string; icon: "link" | "rar" | "doc" };
const fileGroups: { title: string; rows: FileRow[] }[] = [
  {
    title: "Today (2)",
    rows: [
      { name: "Solaraexecutor", type: "", size: "1 KB", icon: "link" },
      { name: "Solaraexecutor", type: "WinRAR ZIP archive", size: "30,863 KB", icon: "rar" },
    ],
  },
  {
    title: "Earlier this",
    rows: [
      { name: "allthursday", type: "", size: "6 KB", icon: "doc" },
      { name: "usbsettings", type: "", size: "5 KB", icon: "doc" },
    ],
  },
  {
    title: "A long time",
    rows: [
      { name: "correctages", type: "", size: "7 KB", icon: "doc" },
      { name: "oneaway", type: "", size: "4 KB", icon: "doc" },
      { name: "highchrist", type: "", size: "12 KB", icon: "doc" },
      { name: "furtherjob", type: "", size: "9 KB", icon: "doc" },
    ],
  },
];

function FileTable() {
  return (
    <table className="w-full table-fixed border-collapse">
      <colgroup>
        <col />
        <col className="w-36" />
        <col className="w-[120px]" />
        <col className="w-[76px]" />
      </colgroup>
      <thead>
        <tr className="h-[27px] text-left text-[#4c607a] [&>th]:border-r [&>th]:border-[#e5e5e5] [&>th]:font-normal">
          <th className="pl-[3px]">Name</th>
          <th className="relative pl-1.5">
            Date modified
            <span className="absolute top-0 left-[67px]"><Chevron d="down" className="h-1.5 w-2.5" color="#888" /></span>
          </th>
          <th className="pl-1.5">Type</th>
          <th className="pl-1.5">Size</th>
        </tr>
      </thead>
      {fileGroups.map((group, g) => (
        <tbody key={group.title}>
          <tr className="h-8">
            <th colSpan={4} className="p-0 pt-px font-normal">
              <span className="-ml-2 flex items-center gap-[3px] text-sm whitespace-nowrap text-[#1e3287]">
                <Chevron d="down" className="size-3" color="#777" />
                {group.title}
                <span className="ml-1 h-px flex-1 bg-[#e2e2e2]" />
              </span>
            </th>
          </tr>
          {group.rows.map((row, r) => (
            <tr key={row.size} className={`h-[21px] text-[#555] ${g === 0 && r === 0 ? "bg-[#cce8ff] outline outline-1 -outline-offset-1 outline-[#99d1ff]" : ""}`}>
              <td className="p-0 pl-1 text-black">
                <span className="flex items-center gap-1 whitespace-nowrap">
                  {row.icon === "doc" ? (
                    <SmallFileIcon />
                  ) : (
                    <span className="relative">
                      <RarIcon />
                      {row.icon === "link" && (
                        <svg viewBox="0 0 8 8" className="absolute bottom-0 left-0 size-2" aria-hidden="true">
                          <rect width="8" height="8" fill="#fff" />
                          <path d="M3 1h4v4L6 4 3 7 2 6l2-3z" fill="#24508f" />
                        </svg>
                      )}
                    </span>
                  )}
                  {row.name}
                </span>
              </td>
              <td />
              <td className="p-0 pl-1.5 whitespace-nowrap">{row.type}</td>
              <td className="p-0 pr-1 text-right whitespace-nowrap">{row.size}</td>
            </tr>
          ))}
        </tbody>
      ))}
    </table>
  );
}

function ExplorerWindow() {
  return (
    <section aria-label="Downloads" className="absolute top-[14px] left-[283px] flex w-[786px] flex-col border-l border-[#8fe0ff] bg-white">
      <TitleArea />
      <Ribbon />
      <NavBar />
      <div className="flex h-[387px]">
        <Tree />
        <div className="flex w-[17px] flex-col items-center bg-[#f0f0f0]">
          <div className="flex h-[17px] items-center"><Chevron d="up" /></div>
          <div className="mt-[155px] h-[119px] w-full bg-[#cdcdcd]" />
          <div className="mt-auto flex h-[17px] items-center"><Chevron d="down" /></div>
        </div>
        <div className="ml-1 flex flex-1 flex-col">
          <div className="flex-1 pr-[13px] pl-[14px]"><FileTable /></div>
          <div className="flex h-4 items-center bg-[#f0f0f0]">
            <span className="flex w-[17px] justify-center"><Chevron d="left" /></span>
            <span className="h-full flex-1 bg-[#cdcdcd]" />
            <span className="flex w-5 justify-center"><Chevron d="right" /></span>
          </div>
        </div>
      </div>
      <footer className="flex h-6 items-center pr-[9px] pl-[14px] text-[#1e395b]">
        <span>8 items</span>
        <span className="ml-[22px]">1 item selected</span>
        <span className="ml-2">1012 bytes</span>
        <button aria-label="Details view" className="ml-auto flex size-[22px] items-center justify-center border border-[#26a0da] bg-[#cdeafa]">
          <svg viewBox="0 0 16 14" className="h-3.5 w-4" aria-hidden="true"><path d="M.5 1h4v3h-4zM.5 5.500h4v3h-4zM.5 10h4v3h-4z" fill="#fff" stroke="#777" /><path d="M6 2.500h4M12 2.500h4M6 7h4M12 7h4M6 11.500h4M12 11.500h4" stroke="#555" /></svg>
        </button>
        <button aria-label="Large icons view" className="ml-1"><PictureIcon className="size-3.5" /></button>
      </footer>
    </section>
  );
}

/* ---------- context menu ---------- */

type MenuEntry = { label: string; icon?: React.ReactNode; bold?: boolean; hover?: boolean; sub?: boolean } | "line";
const menuEntries: MenuEntry[] = [
  { label: "Open", bold: true },
  { label: "Open folder location" },
  { label: "Add to archive...", icon: <RarIcon /> },
  { label: 'Add to "Solaraexecutor.zip - Shortcut.rar"', icon: <RarIcon />, hover: true },
  { label: "Compress and email...", icon: <RarIcon /> },
  { label: 'Compress to "Solaraexecutor.zip - Shortcut.rar" and email', icon: <RarIcon /> },
  { label: "Share with Skype", icon: <SkypeIcon className="size-4" /> },
  { label: "Edit with Notepad++", icon: <NotepadIcon /> },
  { label: "Open with", sub: true },
  "line",
  { label: "Restore previous versions" },
  "line",
  { label: "Send to", sub: true },
  "line",
  { label: "Cut" },
  { label: "Copy" },
  "line",
  { label: "Create shortcut" },
  { label: "Delete" },
  { label: "Rename" },
  "line",
  { label: "Properties" },
];

function ContextMenu() {
  return (
    <div role="menu" className="absolute top-[261px] left-[528px] flex w-[417px] flex-col border border-[#a0a0a0] bg-[#eee] px-0.5 py-1 text-black">
      {menuEntries.map((entry, i) =>
        entry === "line" ? (
          <div key={i} role="separator" className="mx-2 my-[3px] h-px bg-[#919191]" />
        ) : (
          <button
            key={i}
            role="menuitem"
            className={`flex h-[22px] items-center pr-2 pl-2 text-left whitespace-nowrap ${entry.hover ? "bg-white" : ""} ${entry.bold ? "font-bold" : ""}`}
          >
            <span className="mr-2 flex size-4">{entry.icon}</span>
            {entry.label}
            {entry.sub && (
              <svg viewBox="0 0 8 14" className="ml-auto h-3.5 w-2" aria-hidden="true"><path d="M1 1l6 6-6 6" fill="none" stroke="#222" /></svg>
            )}
          </button>
        ),
      )}
    </div>
  );
}

/* ---------- watermarks ---------- */

function Watermark() {
  return (
    <>
      <div className="absolute right-[5px] bottom-0 flex flex-col text-right leading-[17px] text-white">
        <span>Test Mode</span>
        <span>Windows 10 Pro</span>
        <span>Build 19041.vb_release.191206-1406</span>
      </div>
      <div aria-label="ANY RUN" className="absolute right-12 bottom-2.5 flex items-center font-['Roboto_Condensed','Liberation_Sans_Narrow','Liberation_Sans',sans-serif] text-[37px] leading-[60px] text-white opacity-60 [text-shadow:0_0_2px_#888]">
        <span>ANY</span>
        <svg viewBox="0 0 56 60" className="mx-1.5 h-[60px] w-14" fill="none" aria-hidden="true">
          <path d="M11 4v52l41-26z" stroke="#8f99a8" strokeWidth="5" />
          <path d="M11 4v52l41-26zM18 14v30M18 46l26-16M7 8L2 12v38h5" stroke="#fff" strokeWidth="3" />
        </svg>
        <span>RUN</span>
      </div>
    </>
  );
}

/* ---------- taskbar ---------- */

function TaskButton({ label, running, active, children }: { label: string; running?: boolean; active?: boolean; children: React.ReactNode }) {
  return (
    <button aria-label={label} className={`flex h-10 w-12 flex-col items-center ${active ? "bg-[#36474e]" : ""}`}>
      <span className="flex flex-1 items-center">{children}</span>
      <span className={`h-0.5 ${active ? "w-12" : "w-10"} ${running ? "bg-[#76b9ed]" : ""}`} />
    </button>
  );
}

function Taskbar() {
  return (
    <footer className="flex h-10 items-center bg-linear-to-r from-[#00191f] to-[#000814] text-white">
      <button aria-label="Start" className="flex w-12 justify-center">
        <svg viewBox="0 0 16 16" className="size-4" aria-hidden="true"><path d="M0 2l7-1v6.500H0zM8 1l8-1v7.500H8zM0 8.500h7V15l-7-1zM8 8.500h8V16l-8-1z" fill="#fff" /></svg>
      </button>
      <label className="flex h-10 w-72 items-center gap-2.5 border border-[#c8c8c8] bg-[#f2f2f2] pl-3">
        <Magnifier className="size-4" color="#222" thin />
        <input type="text" aria-label="Type here to search" placeholder="Type here to search" className="min-w-0 flex-1 bg-transparent text-sm outline-none placeholder:text-[#333] placeholder:opacity-100" />
      </label>
      <TaskButton label="Task view">
        <svg viewBox="0 0 18 16" className="h-4 w-[18px]" fill="none" stroke="#fff" strokeWidth="1.200" aria-hidden="true"><path d="M1 0v2h10.500V0M1 16v-2h10.500v2M1 4.500h10.500v7H1zM15 0v4M15 8v8" /><rect x="14" y="4.500" width="2.500" height="2.500" fill="#fff" stroke="none" /></svg>
      </TaskButton>
      <div className="flex gap-px pl-[3px]">
        <TaskButton label="Microsoft Edge" running><EdgeIcon className="size-6" /></TaskButton>
        <TaskButton label="File Explorer" running active><LibraryIcon className="size-6" /></TaskButton>
        <TaskButton label="Firefox"><FirefoxIcon className="size-6" /></TaskButton>
        <TaskButton label="WinRAR" running><RarIcon className="size-6" /></TaskButton>
      </div>
      <div className="ml-auto flex items-center gap-2">
        <button aria-label="Hidden icons"><Chevron d="up" className="size-3" color="#fff" /></button>
        <svg viewBox="0 0 16 16" className="ml-0.5 size-4" fill="none" stroke="#fff" strokeWidth="1.200" aria-hidden="true"><path d="M4 2q4-2 8 0M4 14q4 2 8 0" /><rect x="3" y="4" width="8" height="8" rx="2" /><path d="M11 7l3-1.500v5L11 9" /></svg>
        <svg viewBox="0 0 18 16" className="h-4 w-[18px]" fill="none" stroke="#fff" strokeWidth="1.200" aria-hidden="true"><path d="M7 3h10v8H5V7M11 11v3M7 14h8M1 2h4v4H1zM3 6v8h4" /></svg>
        <svg viewBox="0 0 18 16" className="-mr-1 h-4 w-[18px]" fill="none" stroke="#fff" strokeWidth="1.200" aria-hidden="true"><path d="M1 6h3l4-4v12l-4-4H1zM10 6q2 2 0 4M12.500 4q3 4 0 8M15 2q4.500 6 0 12" /></svg>
        <button className="flex w-[58px] flex-col items-center leading-[18px] whitespace-nowrap">
          <span>11:24 AM</span>
          <span>12/12/2024</span>
        </button>
        <button aria-label="Notifications" className="ml-1.5">
          <svg viewBox="0 0 16 16" className="size-4" fill="none" stroke="#fff" strokeWidth="1.200" aria-hidden="true"><path d="M1 1.500h14v11h-4.500L8 15l-2.500-2.500H1z" /></svg>
        </button>
        <span className="mr-1 ml-3 h-10 w-px bg-[#44505a]" />
      </div>
    </footer>
  );
}

export default function App() {
  return (
    <div className="flex min-h-screen flex-col overflow-hidden font-['Open_Sans','Noto_Sans',sans-serif] text-[11px] leading-4 text-[#1a1a1a]">
      <main className="relative min-h-[680px] flex-1 bg-[linear-gradient(95deg,#00a8fc_0%,#00b2ff_18%,#0094f4_38%,#0070dc_58%,#0068d4_72%,#0044b8_92%,#003caa_100%)]">
        <DesktopIcons />
        <ArchiveWindow />
        <ExplorerWindow />
        <ContextMenu />
        <Watermark />
      </main>
      <Taskbar />
    </div>
  );
}
